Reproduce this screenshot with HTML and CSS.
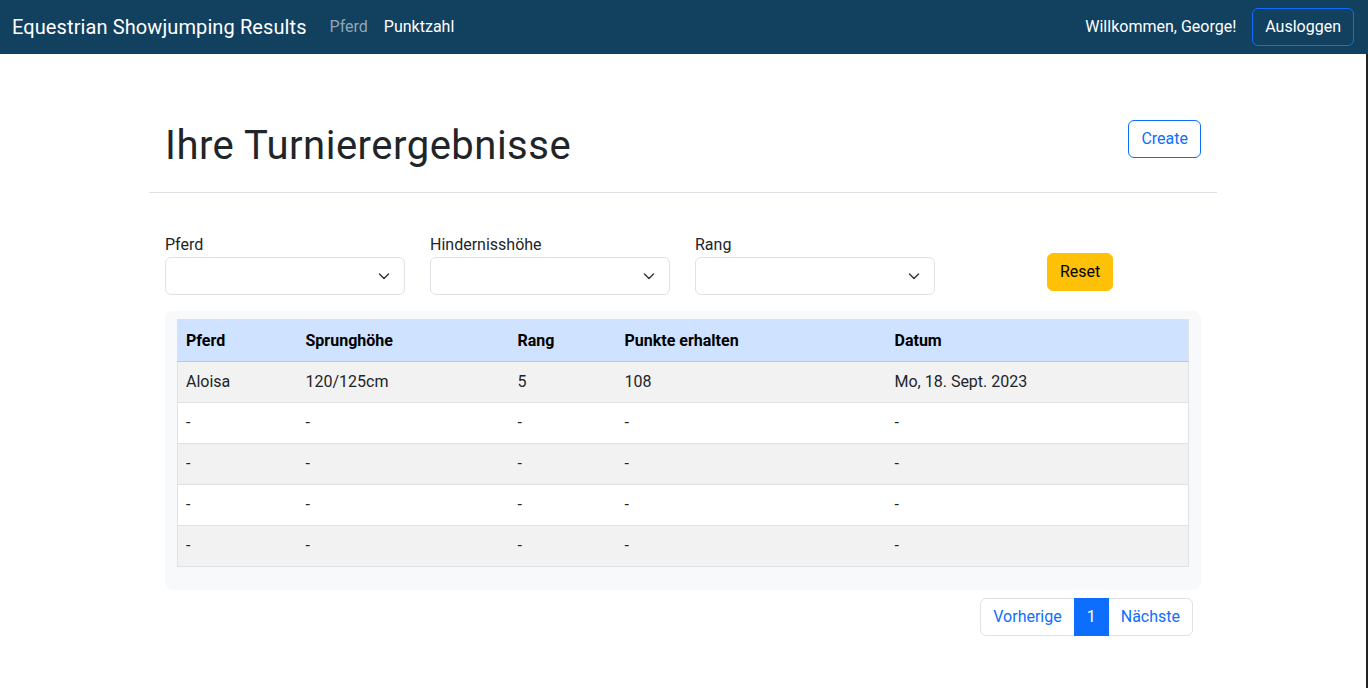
FILE: index.html
```html
<!DOCTYPE html>
<html lang="de">
<head>
<meta charset="utf-8">
<title>Equestrian Showjumping Results</title>
<link rel="stylesheet" href="styles.css">
</head>
<body>
<nav class="navbar">
  <div class="nav-left">
    <a class="brand" href="#">Equestrian Showjumping Results</a>
    <a class="nav-link muted" href="#">Pferd</a>
    <a class="nav-link" href="#">Punktzahl</a>
  </div>
  <div class="nav-right">
    <span class="welcome">Willkommen, George!</span>
    <button class="btn btn-logout">Ausloggen</button>
  </div>
</nav>
<main class="page">
  <div class="container">
    <div class="page-header">
      <h1 class="title">Ihre Turnierergebnisse</h1>
      <button class="btn btn-create">Create</button>
    </div>
    <hr class="divider">
    <div class="filters">
      <div class="field">
        <label class="label">Pferd</label>
        <div class="select"><svg width="12" height="12" viewBox="0 0 12 12"><path d="M1.5 4 6 8.5 10.5 4" fill="none" stroke="#343a40" stroke-width="1.5" stroke-linecap="round" stroke-linejoin="round"/></svg></div>
      </div>
      <div class="field">
        <label class="label">Hindernisshöhe</label>
        <div class="select"><svg width="12" height="12" viewBox="0 0 12 12"><path d="M1.5 4 6 8.5 10.5 4" fill="none" stroke="#343a40" stroke-width="1.5" stroke-linecap="round" stroke-linejoin="round"/></svg></div>
      </div>
      <div class="field">
        <label class="label">Rang</label>
        <div class="select"><svg width="12" height="12" viewBox="0 0 12 12"><path d="M1.5 4 6 8.5 10.5 4" fill="none" stroke="#343a40" stroke-width="1.5" stroke-linecap="round" stroke-linejoin="round"/></svg></div>
      </div>
      <button class="btn btn-reset">Reset</button>
    </div>
    <div class="table-wrap">
      <table class="results">
        <colgroup>
          <col class="c1"><col class="c2"><col class="c3"><col class="c4"><col class="c5">
        </colgroup>
        <thead>
          <tr><th>Pferd</th><th>Sprunghöhe</th><th>Rang</th><th>Punkte erhalten</th><th>Datum</th></tr>
        </thead>
        <tbody>
          <tr><td>Aloisa</td><td>120/125cm</td><td>5</td><td>108</td><td>Mo, 18. Sept. 2023</td></tr>
          <tr><td>-</td><td>-</td><td>-</td><td>-</td><td>-</td></tr>
          <tr><td>-</td><td>-</td><td>-</td><td>-</td><td>-</td></tr>
          <tr><td>-</td><td>-</td><td>-</td><td>-</td><td>-</td></tr>
          <tr><td>-</td><td>-</td><td>-</td><td>-</td><td>-</td></tr>
        </tbody>
      </table>
    </div>
    <div class="pager-row">
      <ul class="pagination">
        <li class="page-item"><a href="#" class="page-link">Vorherige</a></li>
        <li class="page-item active"><a href="#" class="page-link">1</a></li>
        <li class="page-item"><a href="#" class="page-link">Nächste</a></li>
      </ul>
    </div>
  </div>
</main>
</body>
</html>
```
FILE: styles.css
```css
* { box-sizing: border-box; }
html, body { height: 100%; }
body {
  margin: 0;
  font-family: Roboto, "Noto Sans", sans-serif;
  font-size: 16px;
  line-height: 24px;
  color: #212529;
  background: #fff;
  display: flex;
  flex-direction: column;
}
a { text-decoration: none; }
button { font-family: inherit; }

.navbar {
  height: 54px;
  background: #12405f;
  display: flex;
  align-items: center;
  justify-content: space-between;
  padding: 0 14px 0 12px;
  flex-shrink: 0;
}
.nav-left, .nav-right { display: flex; align-items: center; }
.brand {
  color: #fff;
  font-size: 20px;
  line-height: 30px;
  margin-right: 15px;
  letter-spacing: 0.1px;
}
.nav-link {
  color: #fff;
  padding: 8px;
  font-size: 16px;
}
.nav-link.muted { color: rgba(255,255,255,0.55); }
.welcome { color: #fff; margin-right: 16px; }
.btn {
  font-size: 16px;
  line-height: 24px;
  border-radius: 6px;
  padding: 6px 12px;
  cursor: pointer;
}
.btn-logout {
  background: transparent;
  color: #fff;
  border: 1px solid #0d6efd;
  height: 38px;
}

.page {
  flex: 1;
  border-right: 2px solid #222;
}
.container {
  max-width: 1068px;
  margin: 0 auto;
  padding-top: 66px;
}
.page-header {
  display: flex;
  justify-content: space-between;
  align-items: flex-start;
  padding: 0 16px;
}
.title {
  margin: 2px 0 0;
  font-size: 40px;
  line-height: 48px;
  font-weight: 400;
  letter-spacing: 0.5px;
}
.btn-create {
  background: #fff;
  color: #0d6efd;
  border: 1px solid #0d6efd;
  height: 38px;
}
.divider {
  border: 0;
  border-top: 1px solid #dee2e6;
  margin: 22px 0 0;
}
.filters {
  display: flex;
  align-items: flex-end;
  gap: 25px;
  padding: 0 16px;
  margin-top: 40px;
}
.field { width: 240px; display: flex; flex-direction: column; }
.label { display: block; }
.select {
  height: 38px;
  border: 1px solid #dee2e6;
  border-radius: 6px;
  display: flex;
  align-items: center;
  justify-content: flex-end;
  padding-right: 14px;
  background: #fff;
}
.btn-reset {
  margin-left: 87px;
  margin-bottom: 4px;
  background: #ffc107;
  border: 1px solid #ffc107;
  color: #000;
  height: 38px;
}

.table-wrap {
  margin: 16px 16px 0;
  background: #f8f9fa;
  border-radius: 8px;
  padding: 8px 12px 23px;
}
.results {
  width: 100%;
  border-collapse: collapse;
  table-layout: fixed;
  border: 1px solid #dee2e6;
}
.c1 { width: 120px; }
.c2 { width: 212px; }
.c3 { width: 107px; }
.c4 { width: 270px; }
.results th, .results td {
  text-align: left;
  padding: 8px;
  line-height: 24px;
  height: 40px;
}
.results th {
  background: #cfe2ff;
  color: #000;
  font-weight: 700;
  border-bottom: 1px solid #b6c9e6;
  height: 41px;
  padding-top: 9px;
}
.results td { border-bottom: 1px solid #dee2e6; background: #fff; }
.results tbody tr:nth-child(odd) td { background: #f2f2f2; }

.pager-row {
  display: flex;
  justify-content: flex-end;
  padding-right: 24px;
  margin-top: 8px;
}
.pagination {
  display: flex;
  list-style: none;
  margin: 0;
  padding: 0;
}
.page-link {
  display: block;
  height: 38px;
  padding: 6px 12px;
  color: #0d6efd;
  background: #fff;
  border: 1px solid #dee2e6;
  margin-left: -1px;
}
.page-item:first-child .page-link { border-radius: 6px 0 0 6px; margin-left: 0; }
.page-item:last-child .page-link { border-radius: 0 6px 6px 0; }
.page-item.active .page-link {
  background: #0d6efd;
  border-color: #0d6efd;
  color: #fff;
  position: relative;
}
```
